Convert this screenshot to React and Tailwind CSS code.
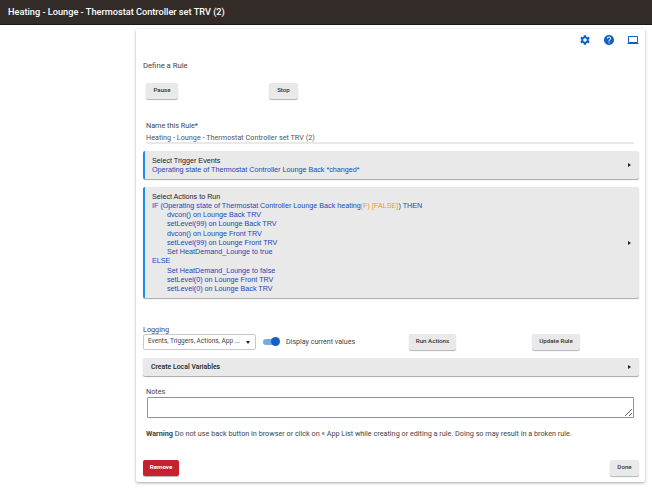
import React from 'react';

const actionLines = [
    { text: 'dvcon() on Lounge Back TRV' },
    { text: 'setLevel(99) on Lounge Back TRV' },
    { text: 'dvcon() on Lounge Front TRV' },
    { text: 'setLevel(99) on Lounge Front TRV' },
    { text: 'Set HeatDemand_Lounge to true' },
    { text: 'ELSE', outdent: true },
    { text: 'Set HeatDemand_Lounge to false' },
    { text: 'setLevel(0) on Lounge Front TRV' },
    { text: 'setLevel(0) on Lounge Back TRV' },
];

function GreyButton({ children, className = '' }) {
    return (
        <button className={`h-4 shrink-0 rounded-[2px] bg-[#e9e9e9] shadow-[0_1px_1px_rgba(0,0,0,0.3)] text-[6.2px] font-medium text-[#333] flex items-center justify-center whitespace-nowrap ${className}`}>
            {children}
        </button>
    );
}

function Arrow() {
    return <span className="w-0 h-0 border-y-[2.5px] border-y-transparent border-l-[3.5px] border-l-[#222]" />;
}

export default function App() {
    return (
        <div className="w-[652px] h-[499px] bg-white overflow-hidden font-['Roboto',sans-serif] text-[#444]">
            {/* Header */}
            <div className="h-[25px] bg-[#332b28] border-b border-[#1c1816] flex items-center pl-2 text-white text-[9.2px] font-medium">
                Heating - Lounge - Thermostat Controller set TRV (2)
            </div>

            {/* Card */}
            <div className="ml-[136px] mt-[4px] w-[509px] h-[453px] bg-white rounded-[2px] shadow-[0_1px_3px_rgba(0,0,0,0.35)] pl-[7px] pr-[6px] flex flex-col">
                {/* Icons */}
                <div className="h-[20px] mt-[1px] flex items-center justify-end gap-[12px]">
                    <svg width="12" height="12" viewBox="0 0 24 24" fill="#0d62c4">
                        <path d="M19.14 12.94c.04-.3.06-.61.06-.94s-.02-.64-.07-.94l2.03-1.58a.49.49 0 0 0 .12-.61l-1.92-3.32a.49.49 0 0 0-.59-.22l-2.39.96a7 7 0 0 0-1.62-.94l-.36-2.54a.48.48 0 0 0-.48-.41h-3.84a.48.48 0 0 0-.47.41l-.36 2.54c-.59.24-1.13.57-1.62.94l-2.39-.96a.49.49 0 0 0-.59.22L2.74 8.87a.48.48 0 0 0 .12.61l2.03 1.58c-.05.3-.09.63-.09.94s.02.64.07.94l-2.03 1.58a.49.49 0 0 0-.12.61l1.92 3.32c.12.22.37.29.59.22l2.39-.96c.5.38 1.03.7 1.62.94l.36 2.54c.05.24.24.41.48.41h3.84c.24 0 .44-.17.47-.41l.36-2.54c.59-.24 1.13-.56 1.62-.94l2.39.96c.22.08.47 0 .59-.22l1.92-3.32a.48.48 0 0 0-.12-.61l-2.01-1.58zM12 15.6a3.6 3.6 0 1 1 0-7.2 3.6 3.6 0 0 1 0 7.2z" />
                    </svg>
                    <svg width="12" height="12" viewBox="0 0 24 24" fill="#0d62c4">
                        <path d="M12 2C6.48 2 2 6.48 2 12s4.48 10 10 10 10-4.48 10-10S17.52 2 12 2zm1 17h-2v-2h2v2zm2.07-7.75-.9.92C13.45 12.9 13 13.5 13 15h-2v-.5c0-1.1.45-2.1 1.17-2.83l1.24-1.26c.37-.36.59-.86.59-1.41 0-1.1-.9-2-2-2s-2 .9-2 2H8c0-2.21 1.79-4 4-4s4 1.79 4 4c0 .88-.36 1.68-.93 2.25z" />
                    </svg>
                    <svg width="12" height="12" viewBox="0 0 24 24" fill="#0d62c4">
                        <path d="M20 18c1.1 0 2-.9 2-2V6c0-1.1-.9-2-2-2H4c-1.1 0-2 .9-2 2v10c0 1.1.9 2 2 2H1v2h22v-2h-3zM4 6h16v10H4V6z" />
                    </svg>
                </div>

                <div className="mt-[10px] text-[7.7px] leading-[12px] text-[#444]">Define a Rule</div>

                {/* Pause / Stop */}
                <div className="mt-[11px] flex">
                    <GreyButton className="ml-[3px] w-[32px]">Pause</GreyButton>
                    <GreyButton className="ml-[91px] w-[29px]">Stop</GreyButton>
                </div>

                {/* Name */}
                <div className="mt-[21px] ml-[3px] mr-[5px] border-b-2 border-[#e8e8e8] text-[7.25px]">
                    <div className="leading-[12px] text-[#444]">Name this Rule*</div>
                    <div className="mt-[1px] leading-[9px] text-[#555]">Heating - Lounge - Thermostat Controller set TRV (2)</div>
                </div>

                {/* Trigger events */}
                <div className="mt-[7px] h-[28px] shrink-0 bg-[#e9e9e9] border-l-2 border-[#1f8cf0] rounded-[2px] shadow-[0_1px_1px_rgba(0,0,0,0.35)] pl-[7px] pr-[8px] flex items-center justify-between text-[7.2px] leading-[9.3px] font-['Liberation_Sans',sans-serif]">
                    <div>
                        <div className="text-[#222]">Select Trigger Events</div>
                        <div className="text-[#2146b8]">Operating state of Thermostat Controller Lounge Back *changed*</div>
                    </div>
                    <Arrow />
                </div>

                {/* Actions */}
                <div className="mt-[8px] h-[111px] shrink-0 bg-[#e9e9e9] border-l-2 border-[#1f8cf0] rounded-[2px] shadow-[0_1px_1px_rgba(0,0,0,0.35)] pl-[7px] pr-[8px] flex items-center justify-between text-[7.2px] leading-[9.25px] font-['Liberation_Sans',sans-serif]">
                    <div className="text-[#2146b8]">
                        <div className="text-[#222]">Select Actions to Run</div>
                        <div>
                            IF (Operating state of Thermostat Controller Lounge Back heating
                            <span className="text-[#f59a16]">(F) [FALSE]</span>) THEN
                        </div>
                        {actionLines.map(line => (
                            <div key={line.text} className={line.outdent ? '' : 'pl-[15px]'}>{line.text}</div>
                        ))}
                    </div>
                    <Arrow />
                </div>

                {/* Logging */}
                <div className="mt-[26px] text-[7.25px] leading-[12px] text-[#444]">Logging</div>
                <div className="flex items-center mt-[-2px]">
                    <div className="w-[113px] h-4 shrink-0 border border-[#c9c9c9] rounded-[2px] pl-1 pr-[5px] flex items-center justify-between text-[6.5px] text-[#444] whitespace-nowrap">
                        <span>Events, Triggers, Actions, App ...</span>
                        <span className="w-0 h-0 border-x-[2.5px] border-x-transparent border-t-[3px] border-t-[#222]" />
                    </div>
                    {/* Toggle */}
                    <div className="relative ml-[7px] w-[16px] h-[6px] shrink-0 rounded-full bg-[#7aa9e2]">
                        <span className="absolute right-[-1px] top-[-2px] w-[9px] h-[9px] rounded-full bg-[#0f62c9]" />
                    </div>
                    <span className="ml-[7px] w-[69px] shrink-0 text-[7.1px] text-[#444] whitespace-nowrap">Display current values</span>
                    <GreyButton className="ml-[54px] w-[47px]">Run Actions</GreyButton>
                    <GreyButton className="ml-[76px] w-[48px]">Update Rule</GreyButton>
                </div>

                {/* Local variables */}
                <div className="mt-[8px] h-[18px] shrink-0 bg-[#e9e9e9] rounded-[2px] shadow-[0_1px_1px_rgba(0,0,0,0.35)] pl-[8px] pr-[8px] flex items-center justify-between text-[6.9px] font-medium text-[#222]">
                    Create Local Variables
                    <Arrow />
                </div>

                {/* Notes */}
                <div className="mt-[10px] ml-[3px] text-[7.25px] leading-[12px] text-[#444]">Notes</div>
                <textarea className="block shrink-0 ml-[4px] mt-[-1px] w-[487px] h-[21px] border border-[#8a94a6] rounded-[1px] bg-white" />

                {/* Warning */}
                <div className="mt-[10px] ml-[3px] text-[7.25px] leading-[12px] text-[#444] whitespace-nowrap">
                    <b className="font-bold">Warning</b> Do not use back button in browser or click on « App List while creating or editing a rule. Doing so may result in a broken rule.
                </div>

                {/* Bottom buttons */}
                <div className="mt-[20px] flex justify-between">
                    <button className="w-[36px] h-4 rounded-[2px] bg-[#c9202f] shadow-[0_1px_1px_rgba(0,0,0,0.3)] text-white text-[6.2px] font-bold">Remove</button>
                    <GreyButton className="w-[29px]">Done</GreyButton>
                </div>
            </div>
        </div>
    );
}
